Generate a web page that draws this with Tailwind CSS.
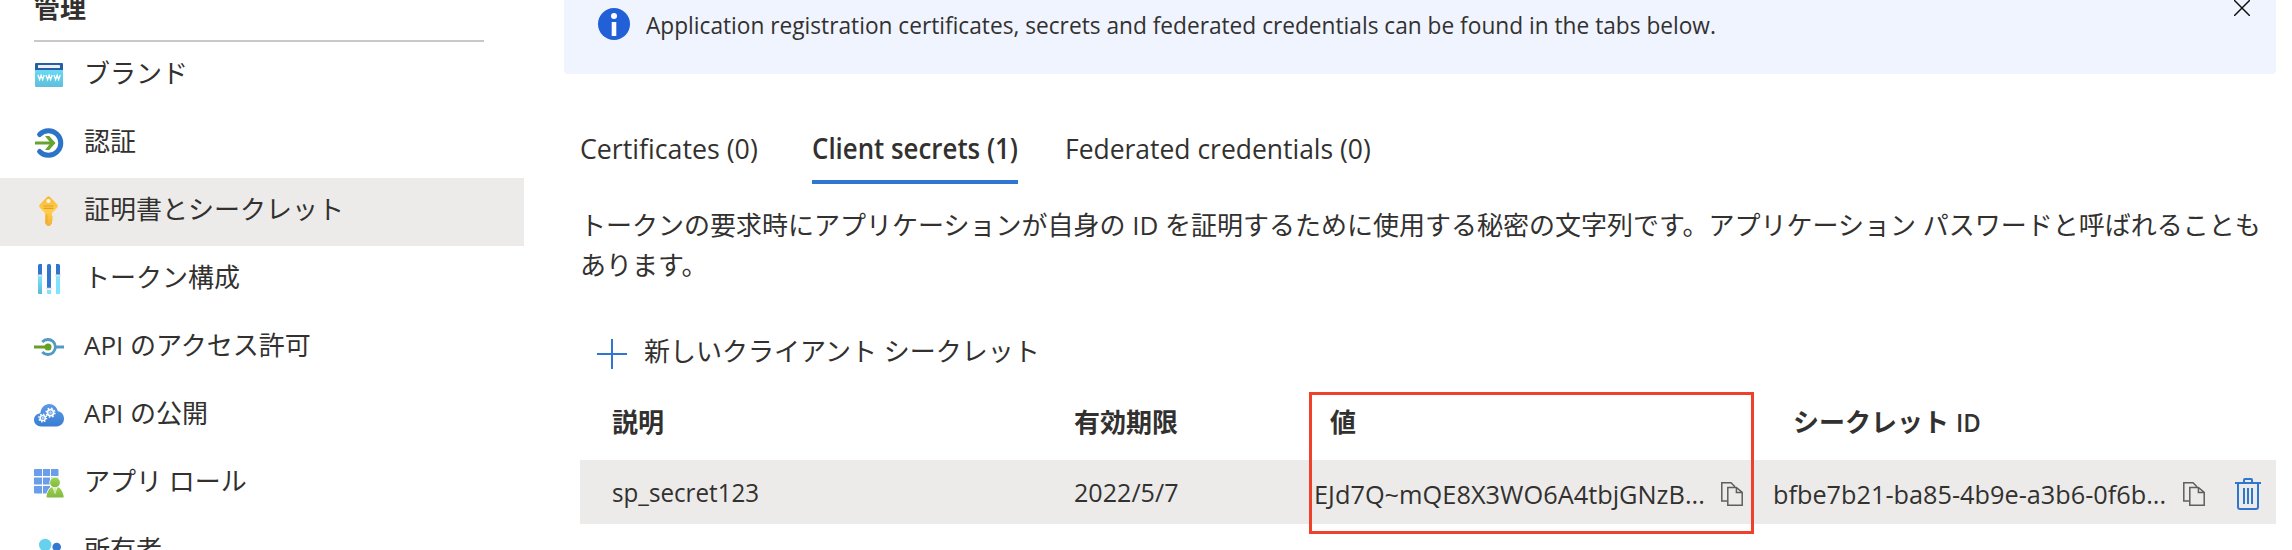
<!DOCTYPE html>
<html lang="ja">
<head>
<meta charset="utf-8">
<title>証明書とシークレット</title>
<script src="https://cdn.jsdelivr.net/npm/@tailwindcss/browser@4"></script>
</head>
<body class="bg-white">
<div class="relative flex h-[550px] w-[2292px] overflow-hidden font-['Open_Sans','Noto_Sans_CJK_JP',sans-serif] text-[26px] leading-[40px] whitespace-nowrap text-[#323130]">

  <!-- Sidebar -->
  <nav class="flex w-[524px] shrink-0 flex-col">
    <div class="mx-[34px] h-[42px] w-[450px] shrink-0 border-b-2 border-[#c8c8c8]">
      <h2 class="-mt-[12px] font-bold">管理</h2>
    </div>
    <a class="flex h-[68px] shrink-0 items-start gap-5 pl-[34px]">
      <svg class="mt-[18px] size-[30px] shrink-0" viewBox="0 0 30 30"><defs><linearGradient id="b" x2="0" y2="1"><stop stop-color="#6bdaf5"/><stop offset="1" stop-color="#5fbfdd"/></linearGradient></defs><path d="M1 9h28v17a1 1 0 0 1-1 1H2a1 1 0 0 1-1-1z" fill="url(#b)"/><path d="M2 3h26a1 1 0 0 1 1 1v6H1V4a1 1 0 0 1 1-1z" fill="#2360a5"/><rect x="4" y="5" width="22" height="3" rx=".6" fill="#f0f0f2"/><path d="M4 15l1.600 4.600 1.500-4.400 1.500 4.400L10.200 15M12 15l1.600 4.600 1.500-4.400 1.500 4.400L18.200 15M20 15l1.600 4.600 1.500-4.400 1.500 4.400L26.200 15" fill="none" stroke="#fff" stroke-width="1.300"/></svg>
      <span class="mt-[11px]">ブランド</span>
    </a>
    <a class="flex h-[68px] shrink-0 items-start gap-5 pl-[34px]">
      <svg class="mt-[18px] size-[30px] shrink-0" viewBox="0 0 30 30" fill="none"><path d="M5.600 6.500A12.300 12.300 0 1 1 5.600 23.500" stroke="#2b74c7" stroke-width="5" stroke-linecap="round"/><path d="M1 15h17" stroke="#68a22f" stroke-width="3"/><path d="M11 8h4.200l6.300 7-6.300 7H11l5.500-7z" fill="#68a22f"/></svg>
      <span class="mt-[11px]">認証</span>
    </a>
    <a class="flex h-[68px] shrink-0 items-start gap-5 bg-[#ecebe9] pl-[34px]">
      <svg class="mt-[18px] size-[30px] shrink-0" viewBox="0 0 30 30"><defs><linearGradient id="k" x2="0" y2="1"><stop stop-color="#f8b63a"/><stop offset=".5" stop-color="#fdd049"/><stop offset="1" stop-color="#f3ae38"/></linearGradient></defs><path d="M13 .9q1.500-1.400 3 0l7 7.300q1.800 1.800 0 3.800l-5 5v3l1 1-1 1.400 1 1.300-1 1.300v2.500l-2.500 2.400q-1 .7-2 0L11 27.500V17L6 12q-1.800-2 0-3.800z" fill="url(#k)"/><circle cx="14.500" cy="5" r="2.100" fill="#fff8e8"/><path d="M9.500 10h10M9.500 12.300h10" stroke="#e69b2c" stroke-width="1.200"/><path d="M12.800 18.500v8" stroke="#eda02d" stroke-width="1"/></svg>
      <span class="mt-[11px]">証明書とシークレット</span>
    </a>
    <a class="flex h-[68px] shrink-0 items-start gap-5 pl-[34px]">
      <svg class="mt-[18px] size-[30px] shrink-0" viewBox="0 0 30 30"><defs><linearGradient id="t" x2="0" y2="1"><stop stop-color="#7fe4fb"/><stop offset="1" stop-color="#5bb8d6"/></linearGradient></defs><path d="M4 1.500q0-1.500 1.500-1.500H8v11H4zM13 1.500q0-1.500 1.500-1.500h1q1.500 0 1.500 1.500V24h-4zM22 0h2.500q1.500 0 1.500 1.500V11h-4z" fill="#3076cf"/><path d="M4 12h4v18H5q-1 0-1-1z" fill="url(#t)"/><path d="M13 26h4v4h-3q-1 0-1-1zM22 12h4v17q0 1-1 1h-3z" fill="#7fe4fb"/><path d="M3 10.400h6v1.800H3zM12 23.800h6v1.800h-6zM21 10.400h6v1.800h-6z" fill="#e4e4e8"/></svg>
      <span class="mt-[11px]">トークン構成</span>
    </a>
    <a class="flex h-[68px] shrink-0 items-start gap-5 pl-[34px]">
      <svg class="mt-[18px] size-[30px] shrink-0" viewBox="0 0 30 30" fill="none"><path d="M8.300 10A7.500 7.500 0 1 1 8.300 20" stroke="#519ac6" stroke-width="2.800"/><path d="M21.500 15H30" stroke="#519ac6" stroke-width="3"/><path d="M0 15h14" stroke="#68a022" stroke-width="3"/><circle cx="14" cy="15" r="3.500" fill="#68a022"/></svg>
      <span class="mt-[11px]">API のアクセス許可</span>
    </a>
    <a class="flex h-[68px] shrink-0 items-start gap-5 pl-[34px]">
      <svg class="mt-[18px] size-[30px] shrink-0" viewBox="0 0 30 30"><defs><linearGradient id="c" x2="0" y2="1"><stop stop-color="#5c9ae8"/><stop offset="1" stop-color="#397ed2"/></linearGradient></defs><path d="M7.500 26.500C3 26.500 0 23.700 0 19.800c0-3.600 2.700-6.300 6.300-6.600C7.200 7.500 10.500 4 15.200 4c4.300 0 7.700 2.900 8.600 7.200 3.700.3 6.200 3.400 6.200 7.400 0 4.600-3.200 7.900-7.500 7.900z" fill="url(#c)"/><g fill="none" stroke="#fff"><circle cx="16.500" cy="12.700" r="3" stroke-width="1.700"/><circle cx="16.500" cy="12.700" r="4.300" stroke-width="1.700" stroke-dasharray="1.600 1.777"/><circle cx="8.700" cy="18" r="2.600" stroke-width="1.500"/><circle cx="8.700" cy="18" r="3.800" stroke-width="1.500" stroke-dasharray="1.400 1.585"/></g><circle cx="16.500" cy="12.700" r="1.400" fill="#b9d3f5"/><circle cx="8.700" cy="18" r="1.200" fill="#b9d3f5"/></svg>
      <span class="mt-[11px]">API の公開</span>
    </a>
    <a class="flex h-[68px] shrink-0 items-start gap-5 pl-[34px]">
      <svg class="mt-[18px] size-[30px] shrink-0" viewBox="0 0 30 30"><defs><linearGradient id="u" x2="0" y2="1"><stop stop-color="#9bd44f"/><stop offset="1" stop-color="#82b842"/></linearGradient></defs><path d="M1 1h7v7H0V2q0-1 1-1zM9 1h7v7H9zM17 1h6.500q1 0 1 1v6H17zM0 9.500h8v7H0zM9 9.500h7v7H9zM17 9.500h7.500v7H17zM0 18h8v7.500H1q-1 0-1-1zM9 18h7v7.500H9z" fill="#6b9eea"/><g fill="url(#u)" stroke="#fff" stroke-width="1.500" paint-order="stroke"><path d="M13.500 29.500q-1.200 0-1-1.200C13.500 22.500 16 18.500 21 18.500s7.500 4 8.700 9.800q.3 1.200-1 1.200z"/><circle cx="21" cy="14.500" r="4.900"/></g><path d="M18.500 19.500h5L21 26z" fill="#f2f8e8"/><path d="M20.300 20h1.400l.5 4L21 26l-1.200-2z" fill="#cfe6ae"/></svg>
      <span class="mt-[11px]">アプリ ロール</span>
    </a>
    <a class="flex h-[68px] shrink-0 items-start gap-5 pl-[34px]">
      <svg class="mt-[18px] size-[30px] shrink-0" viewBox="0 0 30 30"><circle cx="11.200" cy="9" r="6.200" fill="#66d0ed"/><circle cx="22.700" cy="11" r="4.300" fill="#3377d2"/><path d="M2 29q2-12 9-12t9 12z" fill="#66d0ed"/></svg>
      <span class="mt-[11px]">所有者</span>
    </a>
  </nav>

  <!-- Content -->
  <main class="ml-10 flex w-[1712px] shrink-0 flex-col">
    <div class="flex h-[74px] shrink-0 items-start rounded-b bg-[#f0f4fe] pl-[34px]">
      <svg class="mt-2 size-8 shrink-0" viewBox="0 0 32 32"><circle cx="16" cy="16" r="16" fill="#2160d6"/><circle cx="16" cy="8" r="3" fill="#fff"/><path d="M13.700 14h4.600v14h-4.600z" fill="#fff"/></svg>
      <p class="mt-[5px] ml-4 origin-left scale-x-[0.945] text-[24px]">Application registration certificates, secrets and federated credentials can be found in the tabs below.</p>
      <svg class="mr-[26px] ml-auto size-4 shrink-0" viewBox="0 0 16 16"><path d="M0 0l16 16M16 0L0 16" stroke="#111" stroke-width="1.500"/></svg>
    </div>

    <div class="mt-[54px] ml-4 flex h-[56px] shrink-0 text-[28px]">
      <a class="w-[232px]"><span class="inline-block origin-left scale-x-[0.955]">Certificates (0)</span></a>
      <a class="h-[56px] w-[206px] border-b-4 border-[#2f76d0] font-semibold"><span class="inline-block origin-left scale-x-[0.923]">Client secrets (1)</span></a>
      <a class="ml-[47px]"><span class="inline-block origin-left scale-x-[0.945]">Federated credentials (0)</span></a>
    </div>

    <p class="mt-[21px] ml-4">トークンの要求時にアプリケーションが自身の ID を証明するために使用する秘密の文字列です。アプリケーション パスワードと呼ばれることも<br>あります。</p>

    <div class="mt-[46px] ml-[33px] flex h-10 shrink-0 items-start">
      <svg class="mt-[8px] size-[30px] shrink-0" viewBox="0 0 30 30"><path d="M15 0v30M0 15h30" stroke="#2f76d0" stroke-width="2"/></svg>
      <span class="ml-[17px]">新しいクライアント シークレット</span>
    </div>

    <div class="mt-[31px] ml-4 grid h-[58px] shrink-0 grid-cols-[462px_256px_463px_1fr] pl-8 font-semibold">
      <span>説明</span><span>有効期限</span><span>値</span><span>シークレット <span class="inline-block origin-left scale-x-[0.92]">ID</span></span>
    </div>
    <div class="ml-4 flex h-16 shrink-0 items-start bg-[#ecebe9] pl-8">
      <span class="mt-[12px] w-[462px]"><span class="inline-block origin-left scale-x-[0.93]">sp_secret123</span></span>
      <span class="mt-[12px] w-[240px]"><span class="inline-block origin-left scale-x-[0.965]">2022/5/7</span></span>
      <span class="mt-[14px] w-[407px]"><span class="inline-block origin-left scale-x-[0.975]">EJd7Q~mQE8X3WO6A4tbjGNzB...</span></span>
      <svg class="mt-[22px] h-6 w-[22px] shrink-0" viewBox="0 0 22 24" fill="none" stroke="#5f5e5d" stroke-width="1.500"><path d="M6 19H.8V.8h9.200l4 4M6.800 5.400h8.600l5.800 5v12.800H6.800zM15.400 5.400v5h5.800"/></svg>
      <span class="mt-[14px] ml-[30px] w-[410px]"><span class="inline-block origin-left scale-x-[0.972]">bfbe7b21-ba85-4b9e-a3b6-0f6b...</span></span>
      <svg class="mt-[22px] h-6 w-[22px] shrink-0" viewBox="0 0 22 24" fill="none" stroke="#5f5e5d" stroke-width="1.500"><path d="M6 19H.8V.8h9.200l4 4M6.800 5.400h8.600l5.800 5v12.800H6.800zM15.400 5.400v5h5.800"/></svg>
      <svg class="mt-[18px] ml-[30px] h-8 w-[26px] shrink-0" viewBox="0 0 26 32" fill="none" stroke="#2f76d0" stroke-width="2"><path d="M0 5h26M9 5V2q0-1 1-1h6q1 0 1 1v3M3 5v24q0 2 2 2h16q2 0 2-2V5M9 10v16M13 10v16M17 10v16"/></svg>
    </div>
  </main>

  <!-- Highlight around the secret value -->
  <div class="absolute top-[392px] left-[1309px] h-[142px] w-[445px] border-3 border-[#ee402b]"></div>
</div>
</body>
</html>
